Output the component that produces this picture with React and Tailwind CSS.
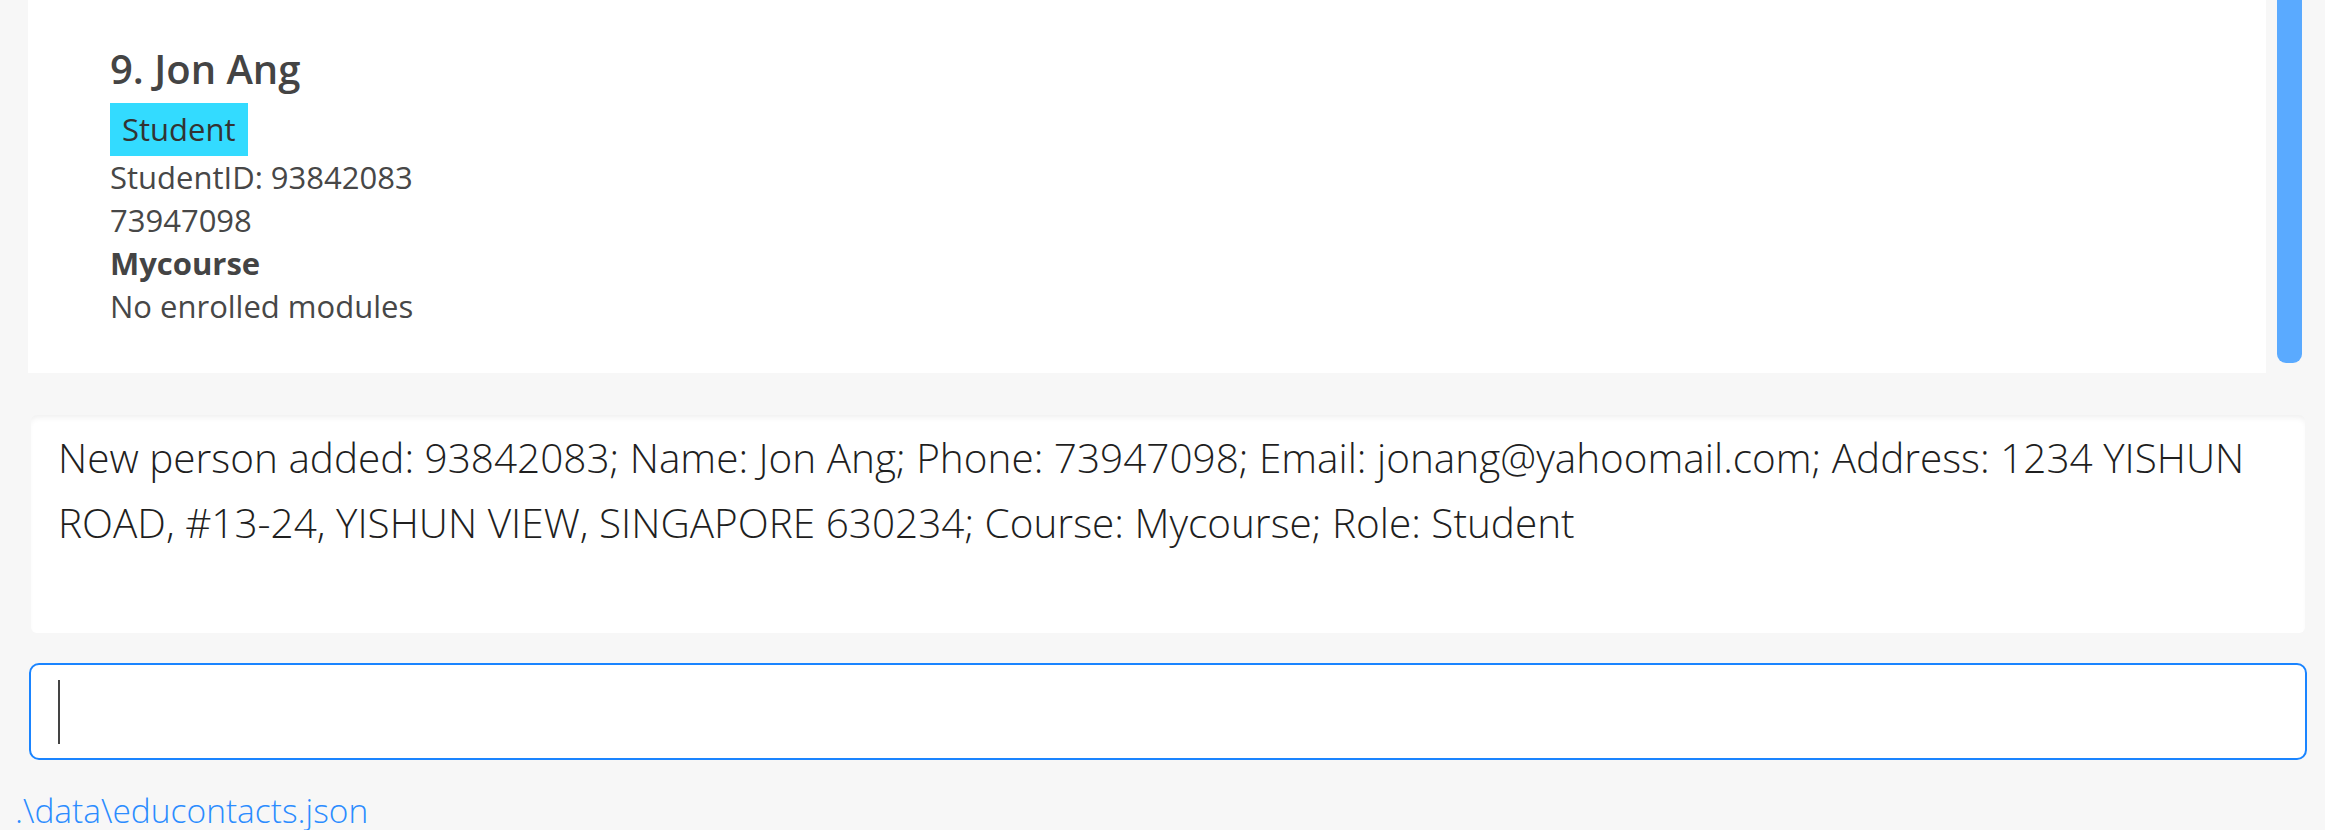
import React from "react";

export default function App() {
  const font = { fontFamily: '"Open Sans", "Noto Sans", sans-serif' };
  return (
    <div
      className="w-[2325px] h-[830px] bg-[#f7f7f7] overflow-hidden"
      style={font}
    >
      <div className="flex h-[373px]">
        <div className="ml-[28px] w-[2238px] h-[373px] bg-white pl-[82px] text-[#474747]">
          <div className="pt-[44px] h-[95px] text-[40px] leading-[50px] font-semibold text-[#444]">
            9. Jon Ang
          </div>
          <div className="mt-[8px] inline-block h-[53px] bg-[#33dbff] px-[12px] text-[31px] leading-[53px] text-[#333]">
            Student
          </div>
          <div className="text-[31px] leading-[43px]">StudentID: 93842083</div>
          <div className="text-[31px] leading-[43px]">73947098</div>
          <div className="text-[31px] leading-[43px] font-bold text-[#444]">Mycourse</div>
          <div className="text-[31px] leading-[43px]">No enrolled modules</div>
        </div>
        <div className="ml-[11px] w-[25px] h-[363px] bg-[#5aaaff] rounded-b-[9px]"></div>
      </div>

      <div className="mt-[42px] ml-[31px] w-[2274px] h-[218px] bg-white rounded-[6px] shadow-[inset_0_5px_6px_-3px_rgba(0,0,0,0.07)] pl-[27px] pt-[10px] text-[40.5px] leading-[65px] font-light text-[#1f1f1f]">
        <div className="whitespace-nowrap">
          New person added: 93842083; Name: Jon Ang; Phone: 73947098; Email: jonang@yahoomail.com; Address: 1234 YISHUN
        </div>
        <div className="whitespace-nowrap">
          ROAD, #13-24, YISHUN VIEW, SINGAPORE 630234; Course: Mycourse; Role: Student
        </div>
      </div>

      <div className="mt-[30px] ml-[29px] w-[2278px] h-[97px] border-2 border-[#1a84ff] rounded-[10px] bg-white flex items-center pl-[27px]">
        <div className="w-[2px] h-[64px] bg-[#444]"></div>
      </div>

      <div className="mt-[30px] ml-[15px] text-[33.5px] leading-[40px] font-light text-[#2b8cff] whitespace-nowrap">
        .\data\educontacts.json
      </div>
    </div>
  );
}
